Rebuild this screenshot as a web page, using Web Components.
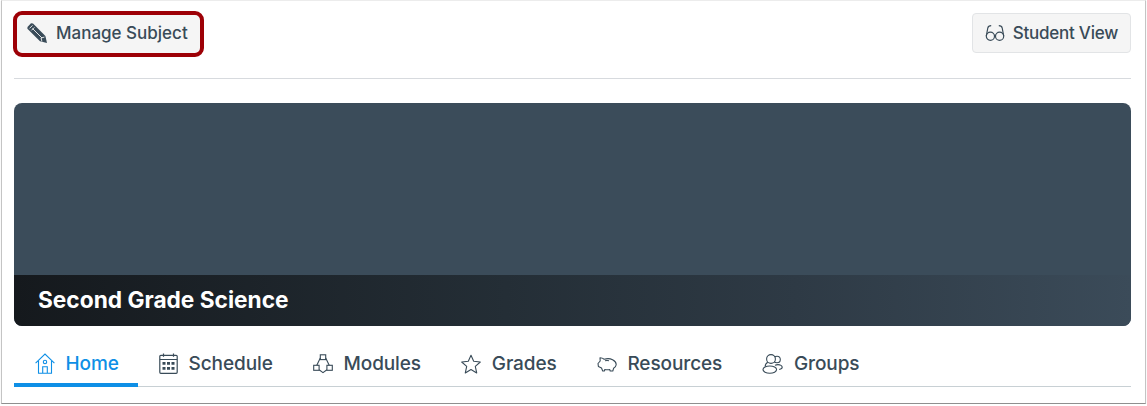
<!DOCTYPE html>
<html>
<head>
<meta charset="utf-8">
<title>Second Grade Science</title>
<style>
  html, body { margin: 0; padding: 0; background: #fff; }
  body { font-family: "Inter", "Open Sans", sans-serif; color: #394b58; }
</style>
</head>
<body>
<subject-page>
  <subject-toolbar>
    <tool-button slot="left" selected label="Manage Subject">
      <svg slot="icon" width="22" height="22" viewBox="0 0 22 22"><path d="M1.500 5 5 1.200 7 1.500 19.400 14l1.600 7-7-1.800L1.400 6.800z" fill="#394b58"/><path d="M3.500 6.400 6.500 3.400M5.400 8.400l3-3M15.900 19.400l-.9-3.400 3.400-.9M6.500 6.500 16 16" fill="none" stroke="#f5f5f5" stroke-width=".9"/></svg>
    </tool-button>
    <tool-button slot="right" label="Student View">
      <svg slot="icon" width="20" height="22" viewBox="0 0 20 22" fill="none" stroke="#394b58" stroke-width="1.200"><circle cx="5.400" cy="14.300" r="4.100"/><circle cx="14.600" cy="14.300" r="4.100"/><path d="M9.400 13.500c.4-.3.800-.3 1.200 0M1.300 14 2.800 6c.3-1.500 1.300-2.400 3.400-2.400M18.700 14 17.200 6c-.3-1.500-1.300-2.400-3.400-2.400"/></svg>
    </tool-button>
  </subject-toolbar>
  <subject-hero title="Second Grade Science"></subject-hero>
  <subject-tabs>
    <tab-item active label="Home">
      <svg slot="icon" width="20" height="21" viewBox="0 0 20 21" fill="none" stroke="currentColor" stroke-width="1.100"><path d="M.6 10.100 10 1l9.400 9.100M3.500 8V20.300h13V8M7.700 20.300v-6.500h4.600v6.500"/><circle cx="10" cy="9" r="1.700"/></svg>
    </tab-item>
    <tab-item label="Schedule">
      <svg slot="icon" width="19" height="21" viewBox="0 0 19 21" fill="none" stroke="currentColor" stroke-width="1.200"><rect x=".8" y="2.300" width="17.400" height="18" rx="1"/><path d="M.8 6.500h17.400M4.500 .4v3.400M14.500 .4v3.400"/><path d="M3.500 9h3v2.800h-3zM8 9h3v2.800H8zM12.500 9h3v2.800h-3zM3.500 14h3v2.800h-3zM8 14h3v2.800H8zM12.500 14h3v2.800h-3z" fill="currentColor" stroke="none"/></svg>
    </tab-item>
    <tab-item label="Modules">
      <svg slot="icon" width="20" height="20" viewBox="0 0 20 20" fill="none" stroke="currentColor" stroke-width="1.100"><rect x="7.300" y=".8" width="5.400" height="4.800"/><rect x=".7" y="11.300" width="5.400" height="5"/><rect x="13.900" y="11.300" width="5.400" height="5"/><path d="M7.300 4 3.800 11.300M12.700 4l3.500 7.300M6.100 15.800 10 18.600l3.900-2.800"/></svg>
    </tab-item>
    <tab-item label="Grades">
      <svg slot="icon" width="20" height="20" viewBox="0 0 20 20" fill="none" stroke="currentColor" stroke-width="1.100"><path d="m10 1.200 2.700 6.100 6.600.7-5 4.400 1.400 6.500L10 15.600l-5.700 3.300 1.400-6.500-5-4.400 6.600-.7z" stroke-linejoin="round"/></svg>
    </tab-item>
    <tab-item label="Resources">
      <svg slot="icon" width="20" height="18" viewBox="0 0 20 18" fill="none" stroke="currentColor" stroke-width="1.100"><path d="M1 8.500 3.200 6 3 2.800c1.800 0 3.200.7 4.200 1.500 2.600-.9 6-.8 8.400.4 2.500 1.300 3.800 3.300 3.500 5.300-.2 1.500-1.300 2.500-2.500 3.300l-.8 2.700h-2.600l-.4-1.400c-1.800.3-3.400.3-5-.1l-.5 1.500H5.700L4.500 13 1.400 11.500z" stroke-linejoin="round"/><path d="M5.400 7h.1M8 5.800c1.300-.4 2.800-.4 4 0"/></svg>
    </tab-item>
    <tab-item label="Groups">
      <svg slot="icon" width="21" height="21" viewBox="0 0 21 21" fill="none" stroke="currentColor" stroke-width="1.100"><circle cx="15" cy="6.500" r="3.300"/><path d="M13 12.300c1-.5 2-.7 3-.7 2.300 0 4.200 1.300 4.200 2.700 0 1-1.200 1.800-3 2.200"/><circle cx="9" cy="6" r="4.400" fill="#fff"/><ellipse cx="7.800" cy="16.600" rx="6.800" ry="3.600" fill="#fff"/><path d="M5.800 9.200C3.500 10.500 3 11.800 3.300 13.600"/></svg>
    </tab-item>
  </subject-tabs>
</subject-page>

<script>
class SubjectPage extends HTMLElement {
  constructor() {
    super();
    this.attachShadow({ mode: 'open' });
    this.shadowRoot.innerHTML = `
      <style>
        :host {
          display: block;
          box-sizing: border-box;
          width: 1145px;
          height: 404px;
          margin-left: 1px;
          padding: 12px 14px 0 12px;
          border-top: 1px solid #ececec;
          border-left: 1px solid #c4c4c4;
          border-right: 1px solid #c4c4c4;
          border-bottom: 1px solid #8f8f8f;
          background: #fff;
          box-shadow: 0 1px 1px rgba(0, 0, 0, .12);
        }
      </style>
      <slot></slot>
    `;
  }
}
customElements.define('subject-page', SubjectPage);

class SubjectToolbar extends HTMLElement {
  constructor() {
    super();
    this.attachShadow({ mode: 'open' });
    this.shadowRoot.innerHTML = `
      <style>
        :host {
          display: flex;
          justify-content: space-between;
          align-items: flex-start;
          height: 65px;
          border-bottom: 1px solid #d7dade;
          margin-bottom: 24px;
        }
      </style>
      <slot name="left"></slot>
      <slot name="right"></slot>
    `;
  }
}
customElements.define('subject-toolbar', SubjectToolbar);

class ToolButton extends HTMLElement {
  constructor() {
    super();
    this.attachShadow({ mode: 'open' });
    this.shadowRoot.innerHTML = `
      <style>
        :host {
          display: inline-flex;
          box-sizing: border-box;
          align-items: center;
          gap: 8px;
          height: 40px;
          padding: 0 12px;
          border: 1px solid #e2e4e6;
          border-radius: 4px;
          background: #f5f5f5;
          color: #394b58;
          font-size: 17px;
          font-weight: 500;
          letter-spacing: -.25px;
        }
        :host([selected]) {
          height: 46px;
          margin: -2px 0 0 -1px;
          padding: 0 12px 2px 9px;
          border: 4px solid #9d0006;
          border-radius: 9px;
          letter-spacing: 0;
        }
        ::slotted(svg) { flex: none; display: block; }
      </style>
      <slot name="icon"></slot>
      <span></span>
    `;
  }
  connectedCallback() {
    this.shadowRoot.querySelector('span').textContent = this.getAttribute('label');
  }
}
customElements.define('tool-button', ToolButton);

class SubjectHero extends HTMLElement {
  constructor() {
    super();
    this.attachShadow({ mode: 'open' });
    this.shadowRoot.innerHTML = `
      <style>
        :host {
          display: flex;
          flex-direction: column;
          justify-content: flex-end;
          height: 223px;
          border-radius: 8px;
          overflow: hidden;
          background: #3b4c5a;
        }
        h1 {
          margin: 0;
          height: 51px;
          box-sizing: border-box;
          padding: 9px 24px 0;
          background: linear-gradient(90deg, #15191d 0%, #242e36 44%, #2e3a45 70%, #3b4b59 100%);
          color: #fff;
          font-size: 22.700px;
          line-height: 32px;
          font-weight: 700;
        }
      </style>
      <h1></h1>
    `;
  }
  connectedCallback() {
    this.shadowRoot.querySelector('h1').textContent = this.getAttribute('title');
  }
}
customElements.define('subject-hero', SubjectHero);

class SubjectTabs extends HTMLElement {
  constructor() {
    super();
    this.attachShadow({ mode: 'open' });
    this.shadowRoot.innerHTML = `
      <style>
        :host {
          display: flex;
          height: 61px;
          box-sizing: border-box;
          border-bottom: 1px solid #c8d0d4;
        }
      </style>
      <slot></slot>
    `;
  }
}
customElements.define('subject-tabs', SubjectTabs);

class TabItem extends HTMLElement {
  constructor() {
    super();
    this.attachShadow({ mode: 'open' });
    this.shadowRoot.innerHTML = `
      <style>
        :host {
          display: flex;
          box-sizing: border-box;
          align-items: center;
          gap: 10.500px;
          height: 61px;
          padding: 18px 19.300px 0 21px;
          border-bottom: 4px solid transparent;
          color: #394b58;
          font-size: 19px;
          font-weight: 500;
          letter-spacing: -.1px;
        }
        :host([active]) {
          color: #0e8fe6;
          border-bottom-color: #0e8fe6;
        }
        ::slotted(svg) { flex: none; display: block; }
      </style>
      <slot name="icon"></slot>
      <span></span>
    `;
  }
  connectedCallback() {
    this.shadowRoot.querySelector('span').textContent = this.getAttribute('label');
  }
}
customElements.define('tab-item', TabItem);
</script>
</body>
</html>
